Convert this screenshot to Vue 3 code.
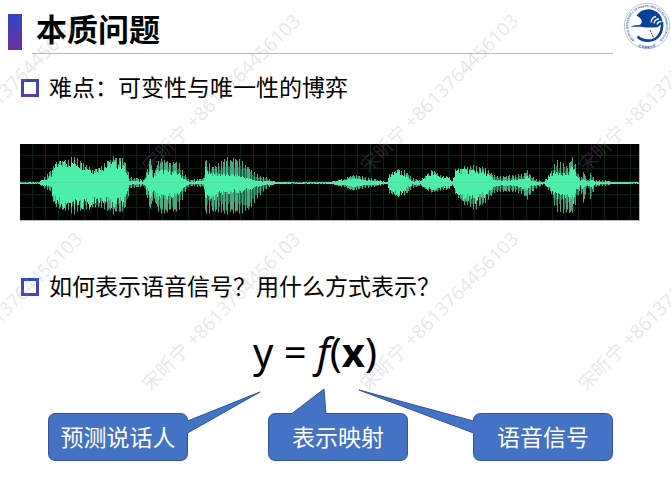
<script setup>
// Envelope key points: [x, height above axis, height below axis, solid share]
const envelope = [
  [0, 0.5, 0.5, 1], [19, 0.5, 0.5, 1], [25, 8, 7, 0.4], [31, 13, 8, 0.5], [32, 18, 20, 0.75],
  [42, 24, 29, 0.8], [57, 26, 31, 0.75], [73, 14, 27, 0.8], [83, 20, 28, 0.75], [92, 27, 31, 0.7],
  [103, 27, 31, 0.65], [107, 14, 20, 0.5], [109, 7, 6, 0.3], [123, 3, 3, 0.4], [128, 18, 20, 0.5],
  [130, 28, 30, 0.5], [133, 8, 15, 0.6], [138, 24, 31, 0.5], [148, 22, 30, 0.5], [158, 21, 29, 0.45],
  [165, 8, 9, 0.4], [169, 3, 3, 0.4], [183, 5, 4, 0.4], [185, 24, 31, 0.55], [193, 17, 31, 0.5],
  [205, 25, 31, 0.32], [217, 25, 31, 0.3], [225, 20, 31, 0.25], [232, 12, 24, 0.25], [238, 8, 14, 0.25],
  [247, 5, 5, 0.3], [255, 1, 1, 1], [275, 0.5, 0.5, 1], [308, 0.7, 0.7, 1], [323, 4, 4, 0.6],
  [333, 8, 8, 0.5], [340, 7, 6, 0.5], [360, 3, 3, 0.5], [367, 1, 1, 1], [369, 9, 10, 0.7],
  [378, 14, 15, 0.8], [385, 12, 12, 0.6], [393, 5, 5, 0.3], [400, 3, 3, 0.5], [405, 8, 7, 0.7],
  [412, 14, 10, 0.65], [420, 8, 8, 0.7], [430, 6, 6, 0.7], [432, 2, 2, 0.8], [435, 14, 11, 0.8],
  [442, 16, 20, 0.75], [455, 18, 28, 0.65], [467, 14, 18, 0.65], [473, 8, 10, 0.4], [483, 7, 9, 0.3],
  [497, 8, 9, 0.4], [507, 12, 16, 0.5], [512, 6, 9, 0.3], [523, 1, 1, 0.6], [530, 11, 9, 0.7],
  [535, 20, 25, 0.5], [537, 24, 31, 0.45], [547, 17, 31, 0.5], [553, 28, 31, 0.6], [556, 14, 18, 0.5],
  [560, 4, 6, 0.5], [563, 12, 22, 0.3], [567, 3, 3, 0.4], [571, 12, 20, 0.25], [574, 3, 4, 0.5],
  [583, 3, 3, 0.4], [593, 1, 1, 1], [619, 0.5, 0.5, 1]
]
const axis = 39

function sample(x) {
  let i = 1
  while (i < envelope.length - 1 && envelope[i][0] < x) i++
  const a = envelope[i - 1]
  const b = envelope[i]
  const t = (x - a[0]) / (b[0] - a[0])
  return [1, 2, 3].map((k) => a[k] + (b[k] - a[k]) * t)
}

function noise(n) {
  const v = Math.sin(n * 12.9898) * 43758.5453
  return v - Math.floor(v)
}

let dim = ''
let mid = ''
let bright = ''
for (let x = 0; x < 619; x++) {
  const [up, down, core] = sample(x)
  const bar = (share, shareDown) => {
    const top = Math.round(axis - Math.max(0.5, up * share))
    const bottom = Math.max(top + 1, Math.round(axis + down * shareDown))
    return `M${x} ${top}h1V${bottom}h-1z`
  }
  const r = noise(x + 1)
  const peak = x % 3 === 0
  const spread = peak ? 0.9 + r * 0.15 : 0.5 + r * 0.45
  dim += bar(spread, spread)
  if (peak || r > 0.75) mid += bar(spread, spread * 0.97)
  bright += bar(core * (0.75 + r * 0.5), core * (0.65 + noise(x + 700) * 0.5))
}

const columns = Array.from({ length: 48 }, (_, i) => 12 + i * 13)
const rows = [11, 24, 37, 50, 63]
const marks = Array.from({ length: 8 }, (_, i) => i)
</script>

<template>
  <main class="slide">
    <header class="head">
      <span class="accent"></span>
      <h1>本质问题</h1>
      <svg class="logo" viewBox="0 0 48 48" role="img" aria-label="北京邮电大学">
        <defs>
          <path id="ring-top" d="M13.900 40.100A19 19 0 1 1 34.100 40.100" />
          <path id="ring-bottom" d="M8.200 39.800A22.300 22.300 0 0 0 39.800 39.800" />
        </defs>
        <circle cx="24" cy="24" r="22.700" fill="none" stroke="#9bb2d6" stroke-width="0.700" />
        <text class="ring"><textPath href="#ring-top" startOffset="50%" text-anchor="middle">BEIJING UNIVERSITY OF POSTS AND TELECOMMUNICATIONS</textPath></text>
        <text class="ring cn"><textPath href="#ring-bottom" startOffset="50%" text-anchor="middle">北京邮电大学</textPath></text>
        <path d="M7.500 24.500C12 22.500 16 24 18 22C20 19 18 16 13.500 13.500C18 7.500 25 6 31 8.500C37 11 39.500 16 39.500 21L35 25C31 25.500 25 26 21 25.200C16 24.300 12 25.300 7.500 24.500z" fill="#08419a" />
        <path d="M14.500 34.500C20 40 30.500 40 35 34.500C38.500 31 39.500 27 39 20" fill="none" stroke="#08419a" stroke-width="2.600" />
        <path d="M28 20.500C28.500 17 30 15 33 14.500M31 21.500C31.500 18.500 33 17 36 17M34 22.500C34.500 20.500 35.500 19.500 38.500 19.500" fill="none" stroke="#fff" stroke-width="1.300" />
        <path d="M27 28L30.500 35.500" fill="none" stroke="#08419a" stroke-width="1" stroke-dasharray="2 1" />
      </svg>
    </header>

    <p class="point"><span class="box"></span>难点：可变性与唯一性的博弈</p>

    <svg class="wave" viewBox="0 0 619 76" preserveAspectRatio="none" role="img" aria-label="语音信号">
      <rect width="619" height="76" fill="#000" />
      <g fill="#06240f">
        <rect v-for="x in columns" :key="'c' + x" :x="x" y="0" width="1" height="76" />
        <rect v-for="y in rows" :key="'r' + y" x="0" :y="y" width="619" height="1" />
      </g>
      <path :d="dim" fill="#1a6644" />
      <path :d="mid" fill="#4aa882" />
      <path :d="bright" fill="#4aefa8" />
      <rect y="38" width="619" height="1" fill="#63cfa0" opacity="0.6" />
    </svg>

    <p class="point second"><span class="box"></span>如何表示语音信号？用什么方式表示？</p>

    <p class="formula">y = <i>f</i>(<b>x</b>)</p>

    <section class="callouts">
      <div class="callout">
        <svg viewBox="0 0 140 48"><path d="M8 0.500H132Q139.500 0.500 139.500 8L212 -21L139.500 20V40Q139.500 47.500 132 47.500H8Q0.500 47.500 0.500 40V8Q0.500 0.500 8 0.500z" /></svg>
        <span>预测说话人</span>
      </div>
      <div class="callout middle">
        <svg viewBox="0 0 140 48"><path d="M8 0.500H24L56 -24L58 0.500H132Q139.500 0.500 139.500 8V40Q139.500 47.500 132 47.500H8Q0.500 47.500 0.500 40V8Q0.500 0.500 8 0.500z" /></svg>
        <span>表示映射</span>
      </div>
      <div class="callout last">
        <svg viewBox="0 0 140 48"><path d="M8 0.500H132Q139.500 0.500 139.500 8V40Q139.500 47.500 132 47.500H8Q0.500 47.500 0.500 40V20L-114 -23L0.500 8Q0.500 0.500 8 0.500z" /></svg>
        <span>语音信号</span>
      </div>
    </section>

    <div class="watermark" aria-hidden="true">
      <div v-for="n in marks" :key="n" class="mark"><span>宋昕宁 +8613764456103</span></div>
    </div>
  </main>
</template>

<style>
body {
  background: #fff;
}
</style>

<style scoped>
.slide {
  position: relative;
  min-height: 100vh;
  box-sizing: border-box;
  overflow: hidden;
  color: #000;
  background: #fff;
  font-family: "Noto Sans", "Noto Sans CJK SC", sans-serif;
}
.head {
  display: grid;
  grid-template-columns: 14px 1fr 48px;
  column-gap: 10px;
  height: 54px;
  padding-left: 8px;
}
.accent {
  height: 36px;
  margin-top: 14px;
  background: linear-gradient(#3046c6, #7030a0);
}
h1 {
  margin: 0;
  padding: 6px 0 0 4px;
  box-sizing: border-box;
  height: 54px;
  border-bottom: 1px solid #bbbcc0;
  font-family: "Noto Sans CJK SC", sans-serif;
  font-size: 31px;
  font-weight: 700;
  line-height: 44px;
}
.logo {
  width: 48px;
  height: 48px;
  margin-top: 2px;
}
.ring {
  fill: #3b62a8;
  font-family: "Liberation Sans", sans-serif;
  font-size: 3px;
  font-weight: 700;
}
.cn {
  font-family: "Noto Sans CJK SC", sans-serif;
}
.point {
  display: flex;
  align-items: center;
  gap: 10px;
  margin: 17px 0 0 21px;
  font-family: "Noto Sans CJK SC", sans-serif;
  font-size: 23px;
  line-height: 30px;
}
.box {
  width: 18px;
  height: 18px;
  margin-top: 4px;
  box-sizing: border-box;
  border: 3px solid;
  border-image: linear-gradient(#2c49c8, #6338ac) 3;
}
.wave {
  display: block;
  width: calc(100% - 52px);
  height: 76px;
  margin: 43px 0 0 20px;
  border: solid #b9b9b9;
  border-width: 0 1px 1px 0;
  shape-rendering: crispEdges;
}
.second {
  margin-top: 49px;
}
.formula {
  margin: 28px 41px 0 0;
  font-size: 40px;
  line-height: 48px;
  text-align: center;
}
.callouts {
  display: grid;
  grid-template-columns: 140px 81fr 140px 66fr 140px;
  margin-top: 37px;
  padding: 0 58px 0 48px;
}
.callout {
  position: relative;
  height: 48px;
  color: #fff;
  font-family: "Noto Sans CJK SC", sans-serif;
  font-size: 23px;
  line-height: 46px;
  text-align: center;
}
.middle {
  grid-column: 3;
}
.last {
  grid-column: 5;
}
.callout svg {
  position: absolute;
  inset: 0;
  overflow: visible;
  fill: #4472c4;
  stroke: #2f5597;
}
.callout span {
  position: relative;
}
.watermark {
  position: absolute;
  top: 13px;
  left: -106px;
  display: grid;
  grid-template-columns: repeat(4, 218px);
  grid-auto-rows: 218px;
  pointer-events: none;
}
.mark {
  display: flex;
  align-items: center;
  justify-content: center;
  height: 160px;
  color: rgba(150, 150, 172, 0.24);
  font-size: 19px;
  line-height: 24px;
  white-space: nowrap;
}
.mark span {
  transform: rotate(-45deg);
}
</style>
